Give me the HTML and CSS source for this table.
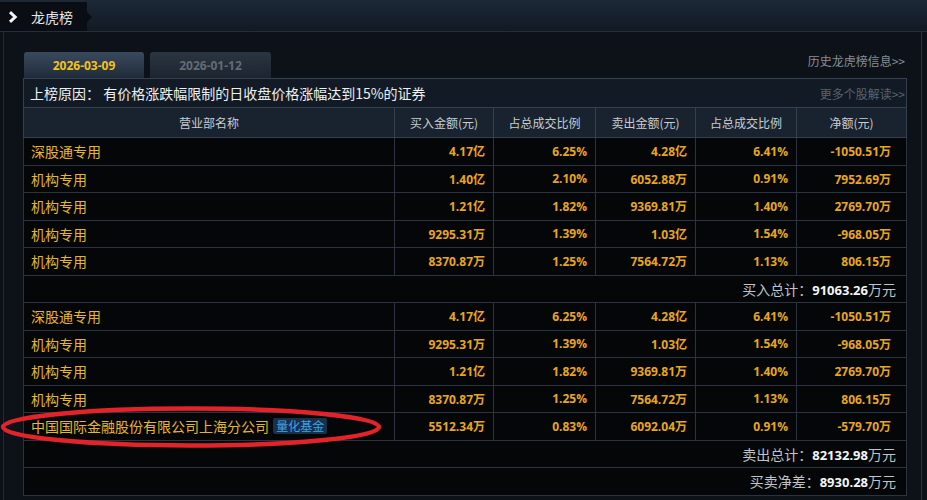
FILE: index.html
```html
<!DOCTYPE html>
<html lang="zh-CN">
<head>
<meta charset="utf-8">
<title>龙虎榜</title>
<link rel="stylesheet" href="styles.css">
</head>
<body>
<div class="page">
  <div class="topbar">
    <div class="title-tab">
      <svg class="chev" width="10" height="12" viewBox="0 0 10 12"><path d="M2 1.2 L7.2 6 L2 10.8" fill="none" stroke="#f4f4f4" stroke-width="3"/></svg>
      <span class="title">龙虎榜</span>
    </div>
  </div>
  <div class="panel">
    <div class="tabs">
      <div class="tab active">2026-03-09</div>
      <div class="tab">2026-01-12</div>
      <span class="history">历史龙虎榜信息&gt;&gt;</span>
    </div>
    <table class="grid">
      <colgroup>
        <col class="c1"><col class="c2"><col class="c3"><col class="c4"><col class="c5"><col class="c6">
      </colgroup>
      <tr class="reason">
        <td colspan="6">
          <div class="reason-in">
            <span>上榜原因： 有价格涨跌幅限制的日收盘价格涨幅达到15%的证券</span>
            <span class="more">更多个股解读&gt;&gt;</span>
          </div>
        </td>
      </tr>
      <tr class="head">
        <th>营业部名称</th><th>买入金额(元)</th><th>占总成交比例</th><th>卖出金额(元)</th><th>占总成交比例</th><th>净额(元)</th>
      </tr>
      <tr class="row"><td class="name">深股通专用</td><td>4.17亿</td><td>6.25%</td><td>4.28亿</td><td>6.41%</td><td>-1050.51万</td></tr>
      <tr class="row"><td class="name">机构专用</td><td>1.40亿</td><td>2.10%</td><td>6052.88万</td><td>0.91%</td><td>7952.69万</td></tr>
      <tr class="row"><td class="name">机构专用</td><td>1.21亿</td><td>1.82%</td><td>9369.81万</td><td>1.40%</td><td>2769.70万</td></tr>
      <tr class="row"><td class="name">机构专用</td><td>9295.31万</td><td>1.39%</td><td>1.03亿</td><td>1.54%</td><td>-968.05万</td></tr>
      <tr class="row"><td class="name">机构专用</td><td>8370.87万</td><td>1.25%</td><td>7564.72万</td><td>1.13%</td><td>806.15万</td></tr>
      <tr class="total"><td colspan="6">买入总计：<b>91063.26</b>万元</td></tr>
      <tr class="row"><td class="name">深股通专用</td><td>4.17亿</td><td>6.25%</td><td>4.28亿</td><td>6.41%</td><td>-1050.51万</td></tr>
      <tr class="row"><td class="name">机构专用</td><td>9295.31万</td><td>1.39%</td><td>1.03亿</td><td>1.54%</td><td>-968.05万</td></tr>
      <tr class="row"><td class="name">机构专用</td><td>1.21亿</td><td>1.82%</td><td>9369.81万</td><td>1.40%</td><td>2769.70万</td></tr>
      <tr class="row"><td class="name">机构专用</td><td>8370.87万</td><td>1.25%</td><td>7564.72万</td><td>1.13%</td><td>806.15万</td></tr>
      <tr class="row"><td class="name">中国国际金融股份有限公司上海分公司 <span class="tag">量化基金</span></td><td>5512.34万</td><td>0.83%</td><td>6092.04万</td><td>0.91%</td><td>-579.70万</td></tr>
      <tr class="total"><td colspan="6">卖出总计：<b>82132.98</b>万元</td></tr>
      <tr class="total"><td colspan="6">买卖净差：<b>8930.28</b>万元</td></tr>
    </table>
  </div>
  <svg class="mark" width="390" height="50" viewBox="0 0 390 50">
    <ellipse cx="191" cy="24" rx="188" ry="18.5" fill="none" stroke="#e3232a" stroke-width="4.5"/>
  </svg>
</div>
</body>
</html>
```

FILE: styles.css
```css
* { box-sizing: border-box; }
html, body { margin: 0; padding: 0; }
body {
  background: #0c1118;
  font-family: "Noto Sans CJK SC", "Microsoft YaHei", sans-serif;
  color: #d0d4d8;
  width: 927px;
  height: 500px;
  overflow: hidden;
}
.page {
  position: relative;
  width: 927px;
  height: 500px;
}
.topbar {
  height: 32px;
  background: linear-gradient(#1d2938, #111923);
  border-bottom: 1px solid #242e3b;
  display: flex;
  align-items: stretch;
  padding-top: 2px;
}
.title-tab {
  width: 92px;
  background: #0a0e14;
  display: flex;
  align-items: center;
  padding-left: 8px;
  gap: 13px;
  clip-path: polygon(0 0, 87px 0, 87px 10px, 92px 15px, 87px 20px, 87px 100%, 0 100%);
}
.chev { display: block; }
.title {
  font-size: 14px;
  color: #e6e8ea;
  line-height: 1;
}
.panel {
  margin-left: 3px;
  width: 919px;
  height: 468px;
  border-left: 1px solid #222a35;
  border-right: 1px solid #2a3440;
  background: #0d1219;
  padding: 20px 0 0 19px;
}
.tabs {
  display: flex;
  align-items: flex-end;
  width: 883px;
  height: 26px;
  padding-left: 1px;
  gap: 6px;
}
.tab {
  width: 120px;
  height: 26px;
  border-radius: 3px 3px 0 0;
  background: linear-gradient(#2b3542, #1c242f);
  color: #636c76;
  font-family: "Open Sans", "DejaVu Sans", sans-serif;
  font-weight: 700;
  font-size: 12px;
  display: flex;
  align-items: center;
  justify-content: center;
}
.tab + .tab { width: 121px; }
.tab.active {
  background: linear-gradient(#3a4a5e, #1f2b3a);
  color: #f2c21e;
}
.history {
  margin-left: auto;
  align-self: center;
  font-size: 12px;
  color: #878e97;
  padding-right: 1px;
  margin-top: -9px;
}
.grid {
  border-collapse: collapse;
  table-layout: fixed;
  width: 883px;
  border: 1px solid #34404d;
}
.c1 { width: 371px; }
.c2 { width: 99px; }
.c3 { width: 102px; }
.c4 { width: 100px; }
.c5 { width: 101px; }
.c6 { width: 110px; }
.grid td, .grid th {
  border: 1px solid #2a333f;
  padding: 0;
}
.reason td {
  height: 29px;
  background: #121a25;
  border-color: #34404d;
}
.reason-in {
  display: flex;
  justify-content: space-between;
  align-items: center;
  padding: 0 1px 0 6px;
  font-size: 14px;
  color: #eef0f2;
}
.more {
  font-size: 12px;
  color: #5a636d;
}
.head th {
  height: 30px;
  background: #19222f;
  font-weight: 400;
  font-size: 12px;
  color: #c9cdd2;
  border-color: #34404d;
}
.row td {
  height: 27.5px;
  background: #050608;
  text-align: right;
  padding-right: 8px;
  font-family: "Open Sans", "Noto Sans CJK SC", sans-serif;
  font-weight: 700;
  font-size: 12px;
  color: #e8a61e;
}
.row td:last-child { padding-right: 15px; }
.row td.name {
  text-align: left;
  padding-left: 7px;
  font-family: "Noto Sans CJK SC", sans-serif;
  font-weight: 400;
  font-size: 14px;
  color: #e7b72a;
}
.tag {
  display: inline-block;
  font-size: 12px;
  color: #3ea2ea;
  background: #18304a;
  border-radius: 2px;
  padding: 0 3px;
  line-height: 16px;
  margin-left: 1px;
  vertical-align: 1px;
}
.total td {
  height: 27.5px;
  background: #050608;
  text-align: right;
  padding-right: 10px;
  font-size: 14px;
  color: #bfc4c9;
}
.total b {
  font-family: "Open Sans", sans-serif;
  font-weight: 700;
  font-size: 13px;
  color: #f4f5f6;
}
.mark {
  position: absolute;
  left: 0;
  top: 403px;
}
```
